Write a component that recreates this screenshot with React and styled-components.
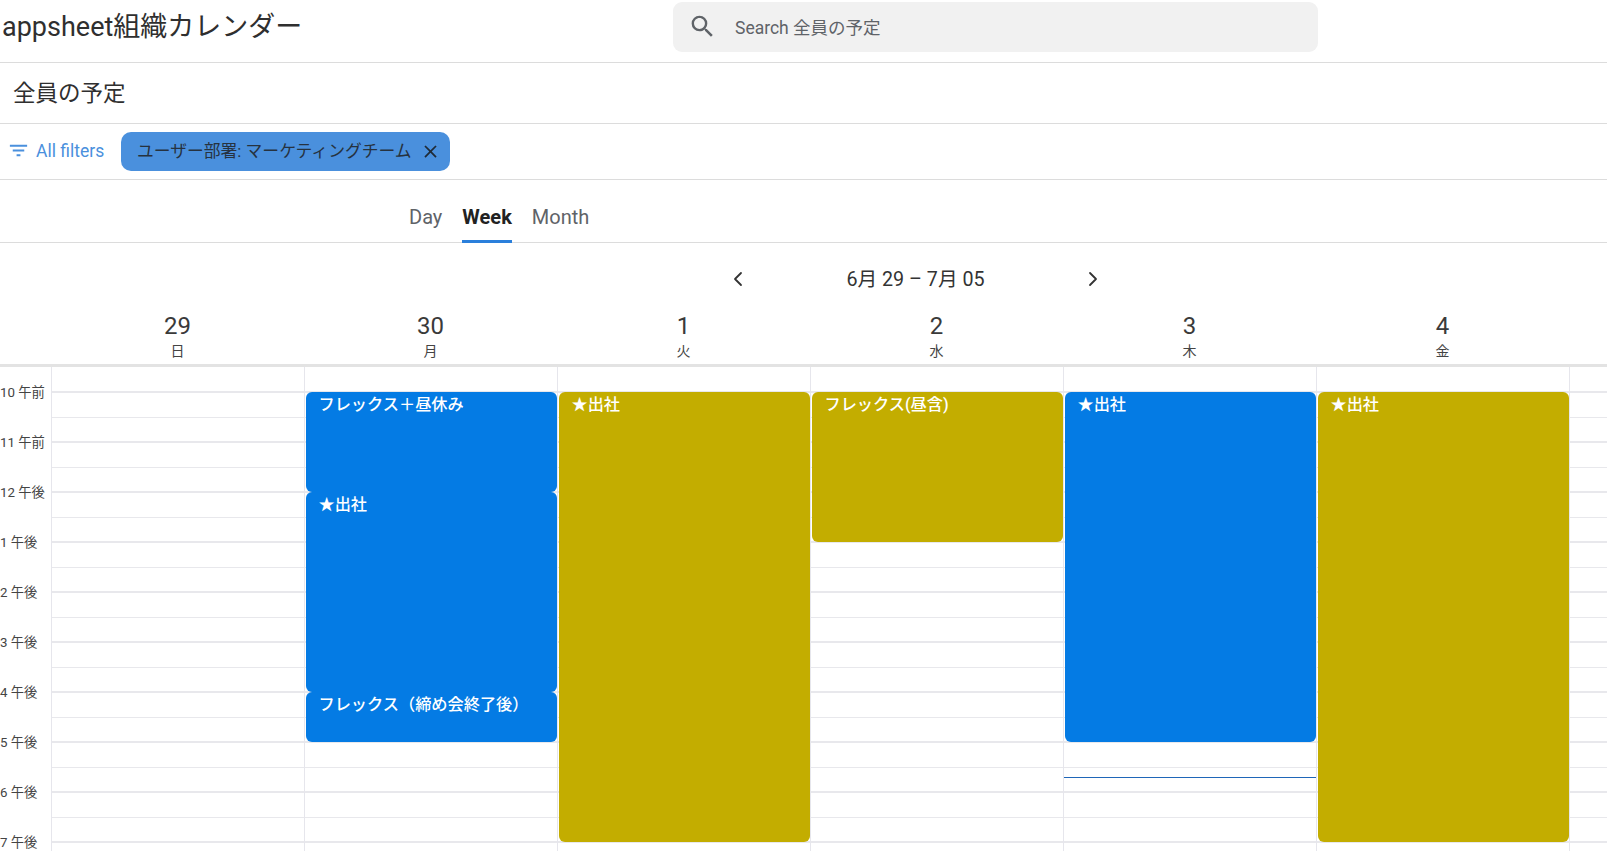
import React from "react";
import styled, { createGlobalStyle } from "styled-components";
import { MdSearch, MdFilterList, MdClose } from "react-icons/md";
import { ChevronLeft, ChevronRight } from "lucide-react";

const HOUR = 50;
const FIRST_SLOT = 24.5;
const BLUE = "#047be4";
const YELLOW = "#c3ad00";

const hours = ["10 午前", "11 午前", "12 午後", "1 午後", "2 午後", "3 午後", "4 午後", "5 午後", "6 午後", "7 午後"];

const days = [
  { date: "29", week: "日", events: [] },
  {
    date: "30",
    week: "月",
    events: [
      { title: "フレックス＋昼休み", start: 0, end: 2, color: BLUE },
      { title: "★出社", start: 2, end: 6, color: BLUE },
      { title: "フレックス（締め会終了後）", start: 6, end: 7, color: BLUE },
    ],
  },
  { date: "1", week: "火", events: [{ title: "★出社", start: 0, end: 9, color: YELLOW }] },
  { date: "2", week: "水", events: [{ title: "フレックス(昼含)", start: 0, end: 3, color: YELLOW }] },
  { date: "3", week: "木", now: 7.7, events: [{ title: "★出社", start: 0, end: 7, color: BLUE }] },
  { date: "4", week: "金", events: [{ title: "★出社", start: 0, end: 9, color: YELLOW }] },
];

const GlobalStyle = createGlobalStyle`
  html, body {
    margin: 0;
    height: 100%;
    overflow: hidden;
    background: #fff;
  }
  body {
    font-family: Roboto, "Noto Sans CJK JP", sans-serif;
    color: #2f2f2f;
  }
`;

const Page = styled.div`
  width: 1607px;
  height: 851px;
  overflow: hidden;
`;

const TopBar = styled.header`
  height: 62px;
  border-bottom: 1px solid #dcdcdc;
  display: flex;
  align-items: center;
`;

const AppTitle = styled.h1`
  margin: 0 0 13px 2px;
  font-size: 27px;
  font-weight: 400;
  width: 671px;
`;

const SearchBox = styled.div`
  width: 645px;
  height: 50px;
  margin-bottom: 9px;
  background: #f1f1f1;
  border-radius: 9px;
  display: flex;
  align-items: center;
  padding-left: 15px;
  box-sizing: border-box;
  color: #5f6368;
  font-size: 17.5px;
  gap: 18px;
`;

const TitleBar = styled.div`
  height: 56px;
  border-bottom: 1px solid #dcdcdc;
  display: flex;
  align-items: center;
  padding: 0 0 4px 13px;
  font-size: 22.5px;
`;

const FilterBar = styled.div`
  height: 55px;
  border-bottom: 1px solid #dcdcdc;
  display: flex;
  align-items: center;
  padding-left: 7px;
`;

const FilterButton = styled.div`
  display: flex;
  align-items: center;
  gap: 6px;
  color: #4a90dd;
  font-size: 17.5px;
  line-height: 20px;
  padding-bottom: 2px;
  width: 114px;
`;

const Chip = styled.div`
  height: 39px;
  background: #4a90dd;
  border-radius: 10px;
  display: flex;
  align-items: center;
  padding: 0 9px 3px 16px;
  box-sizing: border-box;
  font-size: 16.8px;
  gap: 8px;
  color: #26323f;
`;

const ChipClose = styled(MdClose)`
  margin-top: 3px;
  color: #1f2a36;
`;

const Tabs = styled.nav`
  height: 62px;
  border-bottom: 1px solid #dcdcdc;
  display: flex;
  align-items: stretch;
  padding-left: 409px;
  gap: 20px;
`;

const Tab = styled.div`
  display: flex;
  align-items: center;
  font-size: 20px;
  height: 63px;
  box-sizing: border-box;
  padding-top: 13px;
  font-weight: ${(p) => (p.$active ? 700 : 400)};
  color: ${(p) => (p.$active ? "#222" : "#5f6368")};
  border-bottom: 3px solid ${(p) => (p.$active ? "#2a7fdb" : "transparent")};
`;

const DateNav = styled.div`
  height: 68px;
  display: flex;
  align-items: center;
  padding-left: 726px;
  font-size: 19.7px;
  box-sizing: border-box;
  color: #333;
`;

const DateRange = styled.div`
  width: 331px;
  text-align: center;
`;

const NavChevron = styled.span`
  display: flex;
  margin-top: 3px;
`;

const HeaderRow = styled.div`
  display: grid;
  grid-template-columns: 51px repeat(6, 253px) 1fr;
  height: 53px;
  border-bottom: 3px solid #e3e3e3;
`;

const DayHead = styled.div`
  text-align: center;
`;

const DayNumber = styled.div`
  font-size: 24px;
  line-height: 30px;
  color: #3a3a3a;
`;

const DayName = styled.div`
  font-size: 14px;
  line-height: 20px;
  color: #444;
`;

const Grid = styled.div`
  display: grid;
  grid-template-columns: 51px repeat(6, 253px) 1fr;
`;

const TimeColumn = styled.div`
  padding-top: ${FIRST_SLOT - 8}px;
`;

const TimeLabel = styled.div`
  height: ${HOUR}px;
  font-size: 13.3px;
  line-height: 18px;
  color: #444;
  white-space: nowrap;
`;

const DayColumn = styled.div`
  position: relative;
  border-left: 1px solid #e6e6ec;
`;

const Slot = styled.div`
  box-sizing: border-box;
  height: ${(p) => p.$height}px;
  border-bottom: ${(p) => (p.$hour ? "2px solid #e8e8ec" : "1px solid #e8e8ec")};
`;

const Event = styled.div`
  position: absolute;
  left: 1px;
  right: 0;
  box-sizing: border-box;
  border-radius: 6px;
  padding: 3px 0 0 12.5px;
  color: #fff;
  font-size: 16.2px;
  font-weight: 500;
  line-height: 20px;
  top: ${(p) => FIRST_SLOT + p.$start * HOUR}px;
  height: ${(p) => (p.$end - p.$start) * HOUR}px;
  background: ${(p) => p.$color};
`;

const NowLine = styled.div`
  position: absolute;
  left: 0;
  right: 0;
  height: 1px;
  background: #1f66b8;
  top: ${(p) => FIRST_SLOT + p.$at * HOUR}px;
`;

function ColumnSlots() {
  const slots = [<Slot key="top" $height={FIRST_SLOT + 1} $hour />];
  for (let i = 0; i < 10; i++) {
    slots.push(<Slot key={`a${i}`} $height={HOUR / 2} />);
    slots.push(<Slot key={`b${i}`} $height={HOUR / 2} $hour />);
  }
  return slots;
}

export default function App() {
  return (
    <Page>
      <GlobalStyle />
      <TopBar>
        <AppTitle>appsheet組織カレンダー</AppTitle>
        <SearchBox>
          <MdSearch size={29} />
          <span>Search 全員の予定</span>
        </SearchBox>
      </TopBar>
      <TitleBar>全員の予定</TitleBar>
      <FilterBar>
        <FilterButton>
          <MdFilterList size={23} />
          <span>All filters</span>
        </FilterButton>
        <Chip>
          <span>ユーザー部署: マーケティングチーム</span>
          <ChipClose size={21} />
        </Chip>
      </FilterBar>
      <Tabs>
        <Tab>Day</Tab>
        <Tab $active>Week</Tab>
        <Tab>Month</Tab>
      </Tabs>
      <DateNav>
        <NavChevron>
          <ChevronLeft size={24} strokeWidth={1.8} />
        </NavChevron>
        <DateRange>6月 29 – 7月 05</DateRange>
        <NavChevron>
          <ChevronRight size={24} strokeWidth={1.8} />
        </NavChevron>
      </DateNav>
      <HeaderRow>
        <div />
        {days.map((d) => (
          <DayHead key={d.date}>
            <DayNumber>{d.date}</DayNumber>
            <DayName>{d.week}</DayName>
          </DayHead>
        ))}
      </HeaderRow>
      <Grid>
        <TimeColumn>
          {hours.map((h) => (
            <TimeLabel key={h}>{h}</TimeLabel>
          ))}
        </TimeColumn>
        {days.map((d) => (
          <DayColumn key={d.date}>
            <ColumnSlots />
            {d.events.map((e) => (
              <Event key={e.title + e.start} $start={e.start} $end={e.end} $color={e.color}>
                {e.title}
              </Event>
            ))}
            {d.now && <NowLine $at={d.now} />}
          </DayColumn>
        ))}
        <DayColumn>
          <ColumnSlots />
        </DayColumn>
      </Grid>
    </Page>
  );
}
